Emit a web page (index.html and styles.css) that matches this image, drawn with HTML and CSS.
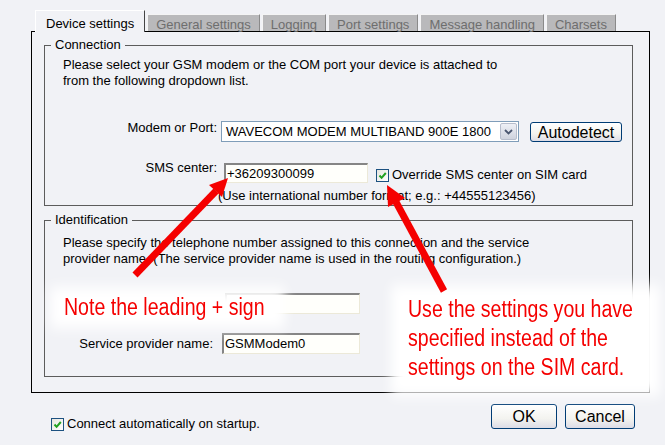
FILE: index.html
```html
<!DOCTYPE html>
<html lang="en">
<head>
    <meta charset="UTF-8">
    <title>Device settings</title>
    <link rel="stylesheet" href="styles.css">
</head>
<body>
    <div class="tabs">
        <span class="tab active">Device settings</span>
        <span class="tab">General settings</span>
        <span class="tab">Logging</span>
        <span class="tab">Port settings</span>
        <span class="tab">Message handling</span>
        <span class="tab">Charsets</span>
    </div>

    <div class="panel">
        <fieldset class="group">
            <legend>Connection</legend>
            <div class="group-body connection">
                <p>Please select your GSM modem or the COM port your device is attached to<br>from the following dropdown list.</p>
                <div class="row modem-row">
                    <label class="lbl">Modem or Port:</label>
                    <div class="select">
                        <span class="select-text">WAVECOM MODEM MULTIBAND 900E 1800</span>
                        <span class="drop">
                            <svg width="9" height="6" viewBox="0 0 9 6"><path d="M1 1 L4.5 4.5 L8 1" fill="none" stroke="#4a5670" stroke-width="1.8"/></svg>
                        </span>
                    </div>
                    <button type="button" class="btn autodetect">Autodetect</button>
                </div>
                <div class="row sms-row">
                    <label class="lbl">SMS center:</label>
                    <div class="input sms">+36209300099</div>
                    <label class="check override">
                        <span class="box"><svg width="11" height="11" viewBox="0 0 11 11"><path d="M2.5 5.5 L4.6 7.8 L8.8 3" fill="none" stroke="#21a121" stroke-width="2"/></svg></span>
                        Override SMS center on SIM card
                    </label>
                </div>
                <div class="hint">(Use international number format; e.g.: +44555123456)</div>
            </div>
        </fieldset>

        <fieldset class="group ident">
            <legend>Identification</legend>
            <div class="group-body identification">
                <p>Please specify the telephone number assigned to this connection and the service<br>provider name. (The service provider name is used in the routing configuration.)</p>
                <div class="row phone-row">
                    <span class="lbl narrow"></span>
                    <div class="input phone"></div>
                </div>
                <div class="row provider-row">
                    <label class="lbl narrow">Service provider name:</label>
                    <div class="input provider">GSMModem0</div>
                </div>
            </div>
        </fieldset>
    </div>

    <div class="footer">
        <label class="check auto">
            <span class="box"><svg width="11" height="11" viewBox="0 0 11 11"><path d="M2.5 5.5 L4.6 7.8 L8.8 3" fill="none" stroke="#21a121" stroke-width="2"/></svg></span>
            Connect automatically on startup.
        </label>
        <div class="buttons">
            <button type="button" class="btn ok">OK</button>
            <button type="button" class="btn cancel">Cancel</button>
        </div>
    </div>

    <!-- annotations drawn over the dialog -->
    <div class="callout note">Note the leading + sign</div>
    <div class="callout use">Use the settings you have<br>specified instead of the<br>settings on the SIM card.</div>

    <svg class="arrows" width="665" height="445" viewBox="0 0 665 445">
        <line x1="135" y1="275" x2="216" y2="191" stroke="#f50000" stroke-width="7"/>
        <polygon points="228,178 222,197 209,185" fill="#f50000"/>
        <line x1="444" y1="291" x2="396" y2="202" stroke="#f50000" stroke-width="7"/>
        <polygon points="387,185 405,198 388,207" fill="#f50000"/>
    </svg>
</body>
</html>
```

FILE: styles.css
```css
*{
    margin: 0;
    padding: 0;
    box-sizing: border-box;
}
body{
    position: relative;
    width: 665px;
    height: 445px;
    overflow: hidden;
    background-color: #f1f2f6;
    font-family: "Liberation Sans", Arial, sans-serif;
    font-size: 13px;
    color: #000;
}

/* tab strip */
.tabs{
    display: flex;
    align-items: flex-end;
    gap: 2px;
    height: 31px;
    padding-left: 35px;
    position: relative;
    z-index: 1;
}
.tab{
    height: 17px;
    padding: 2px 8px 0;
    line-height: 15px;
    color: #6e6e6e;
    background-color: #b9b9bb;
    border-top: 1px solid #f4f4f4;
    border-left: 1px solid #f4f4f4;
    border-right: 1px solid #8a8a8a;
}
.tab.active{
    height: 22px;
    margin-bottom: -1px;
    padding: 5px 10px 0;
    line-height: 16px;
    color: #000;
    background-color: #f1f2f6;
    border-top: 1px solid #fff;
    border-left: 1px solid #fff;
    border-right: 1px solid #444;
}

/* tab page */
.panel{
    margin-left: 31px;
    width: 619px;
    height: 362px;
    padding-top: 5px;
    border: 1px solid #000;
}
.group{
    margin: 0 16px 0 12px;
    border: 1px solid #5c5c5c;
}
.group legend{
    margin-left: 6px;
    padding: 0 4px;
    line-height: 16px;
}
.group.ident{
    margin-top: 6px;
}
.group-body{
    padding-left: 18px;
    line-height: 16px;
}
.group-body.connection{
    padding-top: 4px;
    padding-bottom: 1px;
}
.group-body.identification{
    padding-top: 7px;
    padding-bottom: 22px;
}

.row{
    display: flex;
    align-items: flex-start;
}
.lbl{
    width: 154px;
    text-align: right;
    line-height: 14px;
}
.lbl.narrow{
    width: 150px;
    line-height: 16px;
}
.modem-row{
    margin-top: 32px;
}
.sms-row{
    margin-top: 21px;
}
.sms-row .lbl{
    margin-top: -2px;
}

.select{
    display: flex;
    align-items: center;
    justify-content: space-between;
    width: 298px;
    height: 21px;
    margin-left: 4px;
    padding: 0 1px 0 4px;
    background-color: #fff;
    border: 1px solid #7f9db9;
    font-size: 13px;
}
.drop{
    display: flex;
    align-items: center;
    justify-content: center;
    width: 17px;
    height: 17px;
    background: linear-gradient(#eef0f6, #cfd3de);
    border: 1px solid #b7bdcc;
    border-radius: 2px;
}

.btn{
    font-family: "Liberation Sans", Arial, sans-serif;
    font-size: 16px;
    color: #000;
    border: 1px solid #003c74;
    border-radius: 3px;
    background: linear-gradient(#ffffff, #f3f3ef 60%, #dcdce6);
    cursor: pointer;
}
.autodetect{
    width: 92px;
    height: 20px;
    margin-left: 11px;
    margin-top: 1px;
    line-height: 17px;
}

.input{
    height: 21px;
    padding-left: 1px;
    line-height: 18px;
    background-color: #fffffb;
    border-top: 2px solid #858585;
    border-left: 2px solid #858585;
    border-bottom: 1px solid #ece9d8;
    border-right: 1px solid #ece9d8;
}
.input.sms{
    width: 144px;
    height: 20px;
    margin-left: 7px;
}
.input.phone{
    width: 135px;
    margin-left: 12px;
}
.input.provider{
    width: 138px;
    margin-left: 9px;
}

.check{
    display: flex;
    align-items: center;
    gap: 3px;
    line-height: 16px;
}
.box{
    display: flex;
    align-items: center;
    justify-content: center;
    width: 13px;
    height: 13px;
    background: linear-gradient(135deg, #e6e6df, #ffffff);
    border: 1px solid #1c5180;
}
.override{
    margin-left: 8px;
    margin-top: 4px;
}
.hint{
    margin-top: 5px;
    margin-left: 155px;
}

.phone-row{
    margin-top: 26px;
    align-items: center;
}
.provider-row{
    margin-top: 19px;
    align-items: center;
}

/* bottom buttons */
.footer{
    display: flex;
    align-items: flex-start;
    justify-content: space-between;
    padding: 11px 30px 0 51px;
}
.auto{
    margin-top: 12px;
}
.buttons{
    display: flex;
    gap: 8px;
}
.ok{
    width: 66px;
    height: 25px;
}
.cancel{
    width: 70px;
    height: 25px;
}

/* red annotations, narrowed to the look of a condensed face */
.callout{
    position: absolute;
    z-index: 1;
    font-family: "Liberation Sans", sans-serif;
    font-size: 23px;
    line-height: 29px;
    color: #f50000;
    white-space: nowrap;
    transform: scaleX(0.85);
    transform-origin: left top;
}
.callout::before{
    content: "";
    position: absolute;
    z-index: -1;
    background-color: #fff;
    filter: blur(7px);
}
.callout.note{
    left: 64px;
    top: 293px;
}
.callout.note::before{
    inset: -6px -24px -6px -16px;
}
.callout.use{
    left: 408px;
    top: 295px;
}
.callout.use::before{
    inset: -10px -32px -14px -20px;
}
.arrows{
    position: absolute;
    z-index: 2;
    left: 0;
    top: 0;
    pointer-events: none;
}
```
